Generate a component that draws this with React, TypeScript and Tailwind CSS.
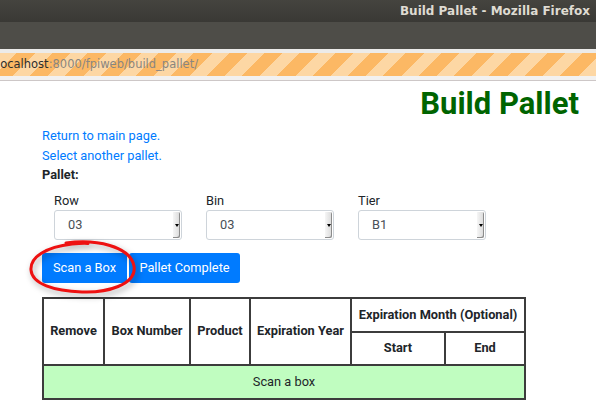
import React from 'react';

const SelectBox: React.FC<{ value: string }> = ({ value }) => (
  <div className="relative flex h-[30px] w-[128px] items-center rounded-[3px] border border-[#ced4da] bg-white pl-[13px] text-[12.8px] text-[#495057]">
    <span>{value}</span>
    <div className="absolute right-[1px] top-[1px] bottom-[1px] flex w-[7px] items-center justify-center rounded-r-[2px] bg-gradient-to-r from-[#f6f6f6] to-[#d9d9d9] shadow-[inset_-1px_-1px_0_#8c8c8c]">
      <div className="h-0 w-0 border-x-[2px] border-t-[3px] border-x-transparent border-t-black" />
    </div>
  </div>
);

const App: React.FC = () => {
  return (
    <div className="h-[415px] w-[596px] overflow-hidden bg-white">
      {/* window title */}
      <div className="flex h-[22px] items-center justify-end bg-gradient-to-b from-[#45443f] to-[#3a3935] pr-[6px] font-['DejaVu_Sans',sans-serif] text-[12px] font-bold text-[#dfdbd2]">
        Build Pallet - Mozilla Firefox
      </div>
      <div className="h-[27px] bg-[#4e4d48]" />
      <div className="h-[4px] bg-[#ecebe9]" />
      <div className="flex h-[23px] items-center bg-[repeating-linear-gradient(135deg,#fdd7a4_0px,#fdd7a4_12px,#fcb864_12px,#fcb864_25px)] font-['DejaVu_Sans',sans-serif] text-[11.5px]">
        <span className="-ml-[3px] text-[#2e2e2e]">localhost</span>
        <span className="text-[#8a8680]">:8000/fpiweb/build_pallet/</span>
      </div>
      <div className="h-[4px] bg-[#f2f1f0]" />
      <div className="h-[1px] bg-[#cdc7c7]" />

      {/* page */}
      <div className="font-['Roboto',sans-serif] text-[12.8px] text-[#212529]">
        <h1 className="mt-[5px] h-[36px] pr-[17px] text-right text-[31px] font-bold leading-[36px] text-[#006400]">
          Build Pallet
        </h1>
        <div className="mt-[4px] pl-[42px] leading-[19.5px]">
          <div className="text-[#007bff]">Return to main page.</div>
          <div className="text-[#007bff]">Select another pallet.</div>
          <div className="font-bold">Pallet:</div>
        </div>
        <div className="mt-[6px] flex gap-[24px] pl-[54px]">
          {[
            ['Row', '03'],
            ['Bin', '03'],
            ['Tier', 'B1'],
          ].map(([label, value]) => (
            <div key={label} className="w-[128px]">
              <div className="leading-[19.5px]">{label}</div>
              <SelectBox value={value} />
            </div>
          ))}
        </div>
        <div className="relative mt-[12.5px] flex gap-[2px] pl-[42px]">
          <button className="h-[30px] w-[85px] rounded-[3px] bg-[#007bff] text-white">Scan a Box</button>
          <button className="h-[30px] w-[111px] rounded-[3px] bg-[#007bff] text-white">Pallet Complete</button>
          <svg
            className="pointer-events-none absolute left-[26px] top-[-15px] drop-shadow-[2px_3px_3px_rgba(0,0,0,0.35)]"
            width="116"
            height="60"
            viewBox="0 0 116 60"
          >
            <path
              d="M40 5 C 70 1, 104 8, 108 28 C 111 47, 80 55, 56 54 C 28 53, 6 46, 5 32 C 4 19, 20 9, 46 6 C 52 5.5, 58 5, 62 5.5"
              fill="none"
              stroke="#ee1111"
              strokeWidth="3"
              strokeLinecap="round"
            />
          </svg>
        </div>
        <table className="ml-[42px] mt-[14px] w-[482px] table-fixed border-collapse border-2 border-[#3c3c3c] text-center">
          <colgroup>
            <col className="w-[61px]" />
            <col className="w-[86px]" />
            <col className="w-[60px]" />
            <col className="w-[101px]" />
            <col className="w-[94px]" />
            <col className="w-[80px]" />
          </colgroup>
          <thead>
            <tr className="h-[34px]">
              <th rowSpan={2} className="border-2 border-[#3c3c3c] p-0 font-bold">Remove</th>
              <th rowSpan={2} className="border-2 border-[#3c3c3c] p-0 font-bold">Box Number</th>
              <th rowSpan={2} className="border-2 border-[#3c3c3c] p-0 font-bold">Product</th>
              <th rowSpan={2} className="border-2 border-[#3c3c3c] p-0 font-bold">Expiration Year</th>
              <th colSpan={2} className="border-2 border-[#3c3c3c] p-0 font-bold">Expiration Month (Optional)</th>
            </tr>
            <tr className="h-[33px]">
              <th className="border-2 border-[#3c3c3c] p-0 font-bold">Start</th>
              <th className="border-2 border-[#3c3c3c] p-0 font-bold">End</th>
            </tr>
          </thead>
          <tbody>
            <tr className="h-[34px] bg-[#c0fdc0]">
              <td colSpan={6} className="border-2 border-[#3c3c3c] p-0">Scan a box</td>
            </tr>
          </tbody>
        </table>
      </div>
    </div>
  );
};

export default App;
